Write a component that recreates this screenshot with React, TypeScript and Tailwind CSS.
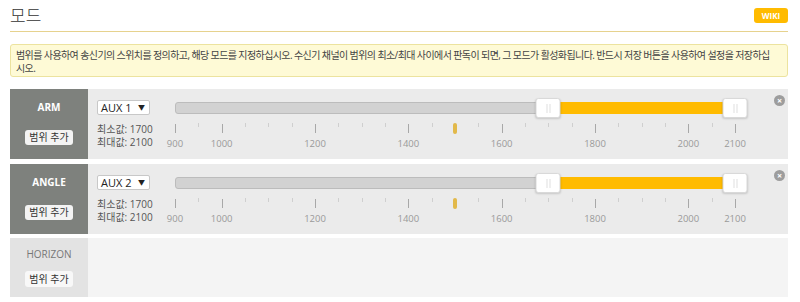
import React from "react";

const FONT = { fontFamily: '"Open Sans", "Noto Sans CJK KR", sans-serif' };

const MIN = 900;
const MAX = 2100;
const pos = (v: number) => ((v - MIN) / (MAX - MIN)) * 100;

const bigTicks = [900, 1000, 1200, 1400, 1600, 1800, 2000, 2100];

function Scale({ marker }: { marker: number }) {
  const ticks: number[] = [];
  for (let v = 900; v <= 2100; v += 50) ticks.push(v);
  return (
    <>
      {ticks.map((v) => {
        if (v === marker) return null;
        const big = bigTicks.includes(v);
        return (
          <div
            key={v}
            className={
              big
                ? "absolute top-[35px] h-[9px] w-px bg-[#a8a8a8]"
                : "absolute top-[34px] h-[4px] w-px bg-[#cfcfcf]"
            }
            style={{ left: `${pos(v)}%` }}
          />
        );
      })}
      {bigTicks.map((v) => (
        <div
          key={"l" + v}
          className="absolute top-[49px] -translate-x-1/2 text-[9.5px] leading-[12px] text-[#9a9a9a]"
          style={{ left: `${pos(v)}%` }}
        >
          {v}
        </div>
      ))}
      <div
        className="absolute top-[34px] h-[11px] w-[4px] -translate-x-1/2 rounded-full bg-[#e2b94a]"
        style={{ left: `${pos(marker)}%` }}
      />
    </>
  );
}

function Handle({ value }: { value: number }) {
  return (
    <div
      className="absolute top-[9px] flex h-[20px] w-[25px] -translate-x-1/2 items-center justify-center gap-[2px] rounded-[3px] border border-[#d9d9d9] bg-white shadow-[0_1px_2px_rgba(0,0,0,0.15)]"
      style={{ left: `${pos(value)}%` }}
    >
      <div className="h-[9px] w-px bg-[#e0e0e0]" />
      <div className="h-[9px] w-px bg-[#e0e0e0]" />
    </div>
  );
}

function ModeRow({ name, aux }: { name: string; aux: string }) {
  const lo = 1700;
  const hi = 2100;
  return (
    <div className="flex h-[70px]">
      <div className="flex w-[78px] flex-col items-center bg-[#7e817d]">
        <div className="mt-[12px] text-[10px] font-bold leading-[12px] text-white">{name}</div>
        <button className="mt-[17px] h-[15px] w-[48px] rounded-[3px] bg-[#f3f3f3] text-[10px] leading-[15px] text-[#333]">
          범위 추가
        </button>
      </div>
      <div className="relative flex flex-1 bg-[#ebebeb] pl-[9px]">
        <div className="w-[78px] pt-[11px]">
          <div className="flex h-[15px] w-[53px] items-center justify-between rounded-[2px] border border-[#c8c8c8] bg-white pl-[3px] pr-[4px] text-[11px] leading-[13px] text-[#222]">
            <span>{aux}</span>
            <span className="text-[7px]">▼</span>
          </div>
          <div className="mt-[8px] text-[10px] leading-[13px] text-[#555]">
            <div>최소값: {lo}</div>
            <div>최대값: {hi}</div>
          </div>
        </div>
        <div className="relative w-[560px]">
          <div className="absolute left-0 right-0 top-[13px] h-[12px] rounded-[3px] border border-[#bcbcbc] bg-[#d2d2d2]" />
          <div
            className="absolute top-[13px] h-[12px] bg-[#ffbb00]"
            style={{ left: `${pos(lo)}%`, width: `${pos(hi) - pos(lo)}%` }}
          />
          <Scale marker={1500} />
          <Handle value={lo} />
          <Handle value={hi} />
        </div>
        <div className="absolute right-[3px] top-[6px] flex h-[11px] w-[11px] items-center justify-center rounded-full bg-[#9d9d9d] text-[9px] font-bold leading-none text-white">
          ×
        </div>
      </div>
    </div>
  );
}

export default function App() {
  return (
    <div className="h-[302px] w-[800px] overflow-hidden bg-white pl-[10px] pr-[12px]" style={FONT}>
      <div className="flex h-[32px] items-center justify-between border-b border-[#e6d28e]">
        <div className="text-[17px] font-light leading-[20px] text-[#333]">모드</div>
        <div className="flex h-[15px] w-[34px] items-center justify-center rounded-[3px] bg-[#ffbb00] text-[8px] font-bold text-white">
          WIKI
        </div>
      </div>
      <div className="mt-[12px] h-[33px] whitespace-nowrap rounded-[3px] border border-[#ece39f] bg-[#fefad6] pl-[5px] pr-[1px] pt-[4px] text-[10px] leading-[13px] tracking-[-0.6px] text-[#444]">
        범위를 사용하여 송신기의 스위치를 정의하고, 해당 모드를 지정하십시오. 수신기 채널이 범위의 최소/최대 사이에서 판독이 되면, 그 모드가 활성화됩니다. 반드시 저장 버튼을 사용하여 설정을 저장하십
        <br />
        시오.
      </div>
      <div className="mt-[12px]">
        <ModeRow name="ARM" aux="AUX 1" />
      </div>
      <div className="mt-[5px]">
        <ModeRow name="ANGLE" aux="AUX 2" />
      </div>
      <div className="mt-[4px] flex h-[59px]">
        <div className="flex w-[78px] flex-col items-center bg-[#e3e3e3]">
          <div className="mt-[10px] text-[10px] leading-[12px] text-[#777]">HORIZON</div>
          <button className="mt-[11px] h-[16px] w-[48px] rounded-[3px] bg-[#f8f8f8] text-[10px] leading-[16px] text-[#333]">
            범위 추가
          </button>
        </div>
        <div className="flex-1 bg-[#f4f4f4]" />
      </div>
    </div>
  );
}
